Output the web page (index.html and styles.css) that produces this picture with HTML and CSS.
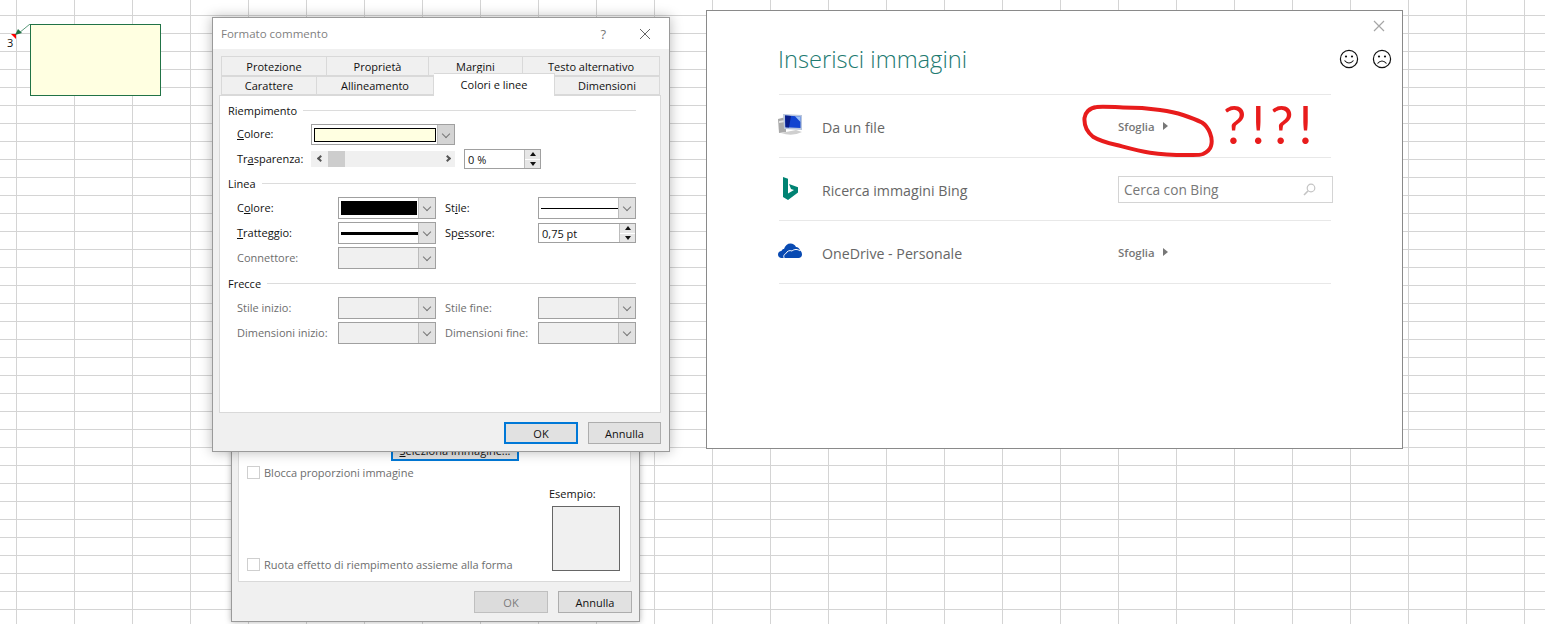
FILE: index.html
```html
<!DOCTYPE html>
<html>
<head>
    <title>Formato commento</title>
    <link rel="stylesheet" href="styles.css">
</head>
<body>
    <!-- cell comment on the sheet -->
    <span class="cell-value">3</span>
    <span class="cell-flag"></span>
    <svg class="comment-arrow" width="16" height="12" viewBox="0 0 16 12">
        <path d="M15 0 L4 9" stroke="#5c9a7c" stroke-width="1" fill="none"/>
        <path d="M0 11 L3 5 L7 9 Z" fill="#217346"/>
    </svg>
    <div class="comment-box"></div>

    <!-- dialog behind -->
    <div class="window lower-window">
        <div class="lower-panel">
            <button class="btn btn-focus select-btn"><u>S</u>eleziona immagine...</button>
            <div class="lower-body">
                <div class="check-col">
                    <label class="check"><span class="check-box"></span>Blocca proporzioni immagine</label>
                    <label class="check"><span class="check-box"></span>Ruota effetto di riempimento assieme alla forma</label>
                </div>
                <div class="sample-col">
                    <div class="sample-label">Esempio:</div>
                    <div class="sample-box"></div>
                </div>
            </div>
        </div>
        <div class="btn-row lower-btns">
            <button class="btn btn-disabled">OK</button>
            <button class="btn">Annulla</button>
        </div>
    </div>

    <!-- Formato commento -->
    <div class="window format-window">
        <div class="title-bar">
            <span class="title-text">Formato commento</span>
            <span class="title-help">?</span>
            <svg class="title-close" width="12" height="12" viewBox="0 0 12 12">
                <path d="M1 1 L11 11 M11 1 L1 11" stroke="#666" stroke-width="1" fill="none"/>
            </svg>
        </div>
        <div class="tabs">
            <div class="tab-row">
                <div class="tab tab-a">Protezione</div>
                <div class="tab tab-b">Proprietà</div>
                <div class="tab tab-c">Margini</div>
                <div class="tab tab-d">Testo alternativo</div>
            </div>
            <div class="tab-row tab-row-front">
                <div class="tab tab-e">Carattere</div>
                <div class="tab tab-f">Allineamento</div>
                <div class="tab tab-active">Colori e linee</div>
                <div class="tab tab-g">Dimensioni</div>
            </div>
        </div>
        <div class="panel">
            <div class="group-head">Riempimento</div>
            <div class="fill-row">
                <span class="field-label"><u>C</u>olore:</span>
                <div class="combo combo-fill"><span class="fill-swatch"></span><span class="combo-btn"></span></div>
            </div>
            <div class="fill-row trans-row">
                <span class="field-label">Tr<u>a</u>sparenza:</span>
                <div class="slider">
                    <span class="slider-arrow slider-left"></span>
                    <span class="slider-thumb"></span>
                    <span class="slider-arrow slider-right"></span>
                </div>
                <div class="spin spin-trans">0 %<span class="spin-btns"><i class="up"></i><i class="down"></i></span></div>
            </div>

            <div class="group-head group-gap">Linea</div>
            <div class="form-grid">
                <span class="field-label">C<u>o</u>lore:</span>
                <div class="combo"><span class="black-swatch"></span><span class="combo-btn"></span></div>
                <span class="field-label">St<u>i</u>le:</span>
                <div class="combo"><span class="line-thin"></span><span class="combo-btn"></span></div>

                <span class="field-label"><u>T</u>ratteggio:</span>
                <div class="combo"><span class="line-thick"></span><span class="combo-btn"></span></div>
                <span class="field-label">Sp<u>e</u>ssore:</span>
                <div class="spin spin-weight">0,75 pt<span class="spin-btns"><i class="up"></i><i class="down"></i></span></div>

                <span class="field-label off">Connettore:</span>
                <div class="combo combo-off"><span class="combo-btn"></span></div>
            </div>

            <div class="group-head group-gap">Frecce</div>
            <div class="form-grid">
                <span class="field-label off">Stile inizio:</span>
                <div class="combo combo-off"><span class="combo-btn"></span></div>
                <span class="field-label off">Stile fine:</span>
                <div class="combo combo-off"><span class="combo-btn"></span></div>

                <span class="field-label off">Dimensioni inizio:</span>
                <div class="combo combo-off"><span class="combo-btn"></span></div>
                <span class="field-label off">Dimensioni fine:</span>
                <div class="combo combo-off"><span class="combo-btn"></span></div>
            </div>
        </div>
        <div class="btn-row">
            <button class="btn btn-focus">OK</button>
            <button class="btn btn-narrow">Annulla</button>
        </div>
    </div>

    <!-- Inserisci immagini -->
    <div class="window insert-window">
        <svg class="insert-close" width="12" height="12" viewBox="0 0 12 12">
            <path d="M1 1 L11 11 M11 1 L1 11" stroke="#a6a6a6" stroke-width="1.2" fill="none"/>
        </svg>
        <div class="insert-head">
            <h1 class="insert-title">Inserisci immagini</h1>
            <div class="faces">
                <svg width="20" height="20" viewBox="0 0 20 20">
                    <circle cx="10" cy="10" r="8.6" fill="none" stroke="#111" stroke-width="1.2"/>
                    <circle cx="7" cy="7.5" r="1.1" fill="#111"/>
                    <circle cx="13" cy="7.5" r="1.1" fill="#111"/>
                    <path d="M5.5 11.5 Q10 16.5 14.5 11.5" fill="none" stroke="#111" stroke-width="1.1"/>
                </svg>
                <svg width="20" height="20" viewBox="0 0 20 20">
                    <circle cx="10" cy="10" r="8.6" fill="none" stroke="#111" stroke-width="1.2"/>
                    <circle cx="7" cy="7.5" r="1.1" fill="#111"/>
                    <circle cx="13" cy="7.5" r="1.1" fill="#111"/>
                    <path d="M5.5 14.5 Q10 9.5 14.5 14.5" fill="none" stroke="#111" stroke-width="1.1"/>
                </svg>
            </div>
        </div>
        <div class="source-list">
            <div class="source-row">
                <svg class="source-icon icon-pc" width="25" height="23" viewBox="0 0 25 23">
                    <path d="M0 6 L8 4 V19 L1 20 Z" fill="#a9a9a9"/>
                    <path d="M1 8 L7 7 V9 L1 10 Z" fill="#e3e3e3"/>
                    <path d="M3 20 L18 17 L24 19 Q14 24 3 20 Z" fill="#cfcfcf"/>
                    <path d="M5 1 L24 2 V17 L6 16 Z" fill="#b9c6dc"/>
                    <path d="M7 2.5 L22.5 3.5 V15 L7.5 14.2 Z" fill="#1144d0"/>
                    <path d="M7 2.5 L13 3 L11 14.4 L7.5 14.2 Z" fill="#0a1f8a"/>
                    <path d="M17 3.2 L22.5 3.5 V9 Z" fill="#9cc0f5"/>
                </svg>
                <span class="source-name">Da un file</span>
                <a class="browse">Sfoglia<span class="browse-arrow"></span></a>
            </div>
            <div class="source-row">
                <svg class="source-icon icon-bing" width="15" height="23" viewBox="0 0 15 23">
                    <path d="M0 0 L5 1.7 V16.5 L11 13 L8 12 L6 7 L15 10.2 V15.5 L5 23 L0 20 Z" fill="#008373"/>
                </svg>
                <span class="source-name">Ricerca immagini Bing</span>
                <div class="bing-search">
                    <span>Cerca con Bing</span>
                    <svg width="13" height="13" viewBox="0 0 13 13">
                        <circle cx="8" cy="5" r="3.8" fill="none" stroke="#c4c4c4" stroke-width="1.2"/>
                        <path d="M5.2 7.8 L1 12" stroke="#c4c4c4" stroke-width="1.6"/>
                    </svg>
                </div>
            </div>
            <div class="source-row">
                <svg class="source-icon icon-cloud" width="25" height="16" viewBox="0 0 25 16">
                    <path d="M3.5 15 C1.5 15 0 13.5 0 11.5 C0 9.5 1.5 8 3.5 8 C4 6.5 5 6 6 6 C7 2.5 9.5 .5 12.5 .5 C15 .5 17 2 18 4 C20 4 21.5 5.5 22 7.5 C23.5 8.5 24 10 24 11.5 C24 13.5 22.5 15 20.5 15 Z" fill="#094ab2"/>
                    <path d="M6.5 15.5 C5 13.5 6 11 8 10.5 C9 8 11.5 7 14 8 C16 6 20 6 22 8" fill="none" stroke="#fff" stroke-width="1"/>
                </svg>
                <span class="source-name">OneDrive - Personale</span>
                <a class="browse">Sfoglia<span class="browse-arrow"></span></a>
            </div>
        </div>
    </div>

    <!-- red marker on top of the screenshot -->
    <svg class="scribble" width="140" height="60" viewBox="0 0 140 60">
        <path d="M60 4 L41 3.5 C30 3 20 2 14.7 3 C7 4 3 9 2.5 14 C2 21 5 28 11 32.7 C18 37 26 39 34.7 41 C46 44 56 47 68 48.7 C80 50.5 92 51 104.7 51 C112 51 117 51.5 121 50 C125 48 128 46 129 42 C130.5 37 130 34 128 29 C126 24 124 21 120 18.5 C113 15 107 13 101 11 C92 8 85 7 78 6 Z" fill="none" stroke="#e81c1c" stroke-width="4" stroke-linejoin="round"/>
    </svg>
    <span class="marker-text">?!?!</span>
</body>
</html>
```

FILE: styles.css
```css
* {
    box-sizing: border-box;
}
html, body {
    margin: 0;
    height: 624px;
    overflow: hidden;
}
body {
    position: relative;
    font-family: "Open Sans", sans-serif;
    font-size: 11px;
    color: #111;
    background-color: #fff;
    background-image:
        linear-gradient(to right, #d4d4d4 1px, transparent 1px),
        linear-gradient(to bottom, #d4d4d4 1px, transparent 1px);
    background-size: 58px 18px;
    background-position: 16px 0, 0 15px;
}

/* sheet */
.cell-value {
    position: absolute;
    left: 7px;
    top: 36px;
    font-size: 11px;
    line-height: 14px;
}
.cell-flag {
    position: absolute;
    left: 11px;
    top: 34px;
    width: 0;
    height: 0;
    border-top: 5px solid #f00;
    border-left: 5px solid transparent;
}
.comment-arrow {
    position: absolute;
    left: 15px;
    top: 24px;
}
.comment-box {
    position: absolute;
    left: 30px;
    top: 24px;
    width: 131px;
    height: 72px;
    background: #ffffe1;
    border: 1px solid #217346;
}

/* windows */
.window {
    position: absolute;
    background: #f0f0f0;
    border: 1px solid #9a9a9a;
}
.format-window {
    left: 212px;
    top: 17px;
    width: 458px;
    height: 435px;
    box-shadow: 0 0 12px rgba(0,0,0,0.28);
}
.lower-window {
    left: 231px;
    top: 429px;
    width: 409px;
    height: 193px;
    padding: 0 8px 0 6px;
    box-shadow: 0 0 6px rgba(0,0,0,0.3);
}
.insert-window {
    left: 706px;
    top: 10px;
    width: 697px;
    height: 439px;
    background: #fff;
    border-color: #8a8a8a;
}

/* title bar */
.title-bar {
    display: flex;
    align-items: center;
    height: 31px;
    padding: 0 18px 0 8px;
    background: #fff;
}
.title-text {
    flex: 1;
    font-size: 11.5px;
    color: #7f7f7f;
}
.title-help {
    margin-right: 33px;
    font-size: 13px;
    color: #777;
}

/* tabs */
.tabs {
    height: 46px;
    padding: 7px 0 0 8px;
}
.tab-row {
    display: flex;
    height: 19.5px;
}
.tab {
    display: flex;
    align-items: center;
    justify-content: center;
    padding-top: 2px;
    border: 1px solid #d9d9d9;
    border-left-width: 0;
    background: #f0f0f0;
}
.tab-row-front .tab {
    padding-top: 1px;
}
.tab-a { width: 106px; border-left-width: 1px; }
.tab-b { width: 102px; }
.tab-c { width: 94px; }
.tab-d { width: 137px; }
.tab-e { width: 96px; border-left-width: 1px; }
.tab-f { width: 117px; }
.tab-g { width: 105px; }
.tab-row-front .tab-active {
    width: 121px;
    height: 23px;
    margin-top: -3px;
    padding-top: 0;
    position: relative;
    background: #fff;
    border-bottom: 0;
    z-index: 1;
}

/* panel */
.panel {
    height: 318px;
    margin: 0 8px 0 6px;
    padding: 7px 24px 0 8px;
    background: #fff;
    border: 1px solid #d9d9d9;
}
.group-head {
    display: flex;
    align-items: center;
    gap: 6px;
    height: 16px;
    margin-bottom: 5px;
    padding-bottom: 2px;
}
.group-head::after {
    content: "";
    flex: 1;
    border-top: 1px solid #dcdcdc;
}
.group-gap {
    margin-top: 7px;
}
.field-label {
    padding-left: 9px;
    padding-bottom: 2px;
    white-space: nowrap;
}
.off {
    color: #6d6d6d;
}
.fill-row {
    display: flex;
    align-items: center;
    height: 21px;
    margin-top: 1px;
}
.fill-row .field-label {
    width: 83px;
}
.trans-row {
    margin-top: 4px;
    height: 20px;
}
.form-grid {
    display: grid;
    grid-template-columns: 110px 98px 102px 98px;
    grid-auto-rows: 22px;
    row-gap: 3px;
    align-items: center;
}

/* combo boxes */
.combo {
    display: flex;
    align-items: center;
    height: 22px;
    padding-left: 2px;
    background: #fff;
    border: 1px solid #a0a0a0;
}
.combo-fill {
    width: 144px;
    height: 21px;
}
.combo-off {
    background: #f0f0f0;
}
.combo-btn {
    position: relative;
    margin-left: auto;
    width: 17px;
    height: 100%;
    background: #e1e1e1;
    border-left: 1px solid #bcbcbc;
    flex: none;
}
.combo-fill .combo-btn {
    background: #d4d4d4;
}
.combo-btn::after {
    content: "";
    position: absolute;
    left: 5px;
    top: 6px;
    width: 5px;
    height: 5px;
    border-right: 1px solid #777;
    border-bottom: 1px solid #777;
    transform: rotate(45deg);
}
.fill-swatch {
    width: 122px;
    height: 14px;
    background: #ffffe1;
    border: 1px solid #000;
}
.black-swatch {
    width: 76px;
    height: 14px;
    background: #000;
}
.line-thin {
    width: 78px;
    border-top: 1px solid #000;
}
.line-thick {
    width: 78px;
    border-top: 3px solid #000;
}

/* slider */
.slider {
    position: relative;
    display: flex;
    align-items: center;
    width: 144px;
    height: 16px;
    background: #f0f0f0;
}
.slider-thumb {
    margin-left: 17px;
    width: 17px;
    height: 16px;
    background: #cdcdcd;
}
.slider-arrow {
    position: absolute;
    top: 5px;
    width: 5px;
    height: 5px;
    border-left: 2px solid #555;
    border-bottom: 2px solid #555;
}
.slider-left {
    left: 7px;
    transform: rotate(45deg);
}
.slider-right {
    right: 5px;
    transform: rotate(225deg);
}

/* spin boxes */
.spin {
    display: flex;
    align-items: center;
    padding-left: 3px;
    padding-bottom: 0;
    background: #fff;
    border: 1px solid #a0a0a0;
}
.spin-trans {
    width: 77px;
    height: 20px;
    margin-left: 9px;
}
.spin-weight {
    height: 20px;
}
.spin-btns {
    display: flex;
    flex-direction: column;
    gap: 1px;
    margin-left: auto;
    width: 16px;
    height: 100%;
    border-left: 1px solid #bcbcbc;
}
.spin-btns i {
    flex: 1;
    display: flex;
    align-items: center;
    justify-content: center;
    background: #e6e6e6;
}
.spin-btns i::after {
    content: "";
    border-left: 3px solid transparent;
    border-right: 3px solid transparent;
}
.spin-btns .up::after {
    border-bottom: 4px solid #111;
}
.spin-btns .down::after {
    border-top: 4px solid #111;
}

/* buttons */
.btn-row {
    display: flex;
    justify-content: flex-end;
    gap: 10px;
    padding: 9px 8px 0 0;
}
.lower-btns {
    margin-right: -1px;
    padding: 9px 0 0;
}
.btn {
    width: 74px;
    height: 22px;
    padding: 0;
    font-family: inherit;
    font-size: 11px;
    color: #111;
    background: #e1e1e1;
    border: 1px solid #adadad;
}
.btn-narrow {
    width: 73px;
}
.btn-focus {
    border: 2px solid #0078d7;
}
.btn-disabled {
    color: #7c7c7c;
    background: #dcdcdc;
    border-color: #bfbfbf;
}

/* lower dialog */
.lower-panel {
    height: 152px;
    padding: 8px 0 0 8px;
    background: #fff;
    border: 1px solid #d9d9d9;
}
.select-btn {
    display: block;
    width: 128px;
    margin-left: 144px;
}
.lower-body {
    display: grid;
    grid-template-columns: 302px 72px;
    height: 105px;
    margin-top: 5px;
}
.check-col {
    display: flex;
    flex-direction: column;
    justify-content: space-between;
}
.check {
    display: flex;
    align-items: center;
    gap: 4px;
    height: 13px;
    color: #6d6d6d;
}
.check-box {
    width: 13px;
    height: 13px;
    background: #fff;
    border: 1px solid #cfcfcf;
}
.sample-col {
    display: flex;
    flex-direction: column;
    justify-content: flex-end;
}
.sample-label {
    margin-bottom: 5px;
    line-height: 14px;
}
.sample-box {
    width: 68px;
    height: 65px;
    margin-left: 3px;
    background: #f0f0f0;
    border: 1px solid #666;
}

/* insert dialog */
.insert-close {
    position: absolute;
    right: 17px;
    top: 9px;
}
.insert-head {
    display: flex;
    align-items: center;
    justify-content: space-between;
    height: 83px;
    padding: 12px 10px 0 71px;
}
.insert-title {
    margin: 0;
    font-size: 23.7px;
    font-weight: 300;
    color: #217a70;
}
.faces {
    display: flex;
    gap: 13px;
}
.source-list {
    width: 552px;
    margin-left: 72px;
}
.source-row {
    display: grid;
    grid-template-columns: 43px 296px 1fr;
    align-items: center;
    height: 63px;
    border-top: 1px solid #e8e8e8;
}
.source-row:last-child {
    border-bottom: 1px solid #e8e8e8;
    height: 64px;
}
.source-icon {
    margin-left: -1px;
}
.icon-pc {
    margin-top: -3px;
}
.icon-bing {
    margin-top: -2px;
    margin-left: 4px;
}
.icon-cloud {
    margin-top: -2px;
}
.source-name {
    padding-top: 2px;
    font-size: 14.2px;
    color: #666;
}
.browse {
    display: flex;
    align-items: center;
    gap: 8px;
    font-size: 11.4px;
    font-weight: 600;
    color: #777;
}
.browse-arrow {
    border-left: 5px solid #777;
    border-top: 4px solid transparent;
    border-bottom: 4px solid transparent;
}
.bing-search {
    display: flex;
    align-items: center;
    justify-content: space-between;
    width: 215px;
    height: 27px;
    padding: 0 16px 0 5px;
    font-size: 13.7px;
    color: #777;
    border: 1px solid #d4d4d4;
}

/* marker */
.scribble {
    position: absolute;
    left: 1082px;
    top: 104px;
}
.marker-text {
    position: absolute;
    left: 1223px;
    top: 92px;
    font-family: "Lato", sans-serif;
    font-size: 52px;
    line-height: 64px;
    letter-spacing: 5px;
    color: #e81c1c;
}
```
